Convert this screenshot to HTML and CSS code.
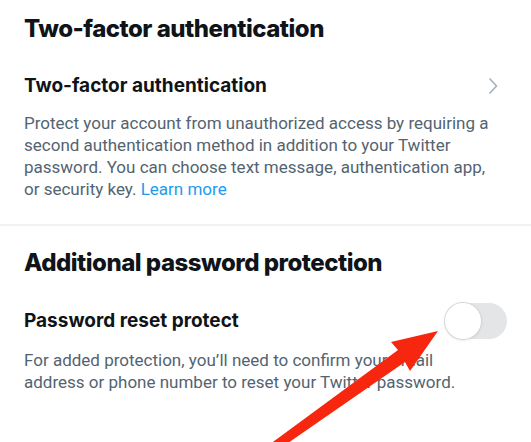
FILE: index.html
```html
<!DOCTYPE html>
<html lang="en">
<head>
  <meta charset="UTF-8" />
  <title>Security settings</title>
  <meta name="viewport" content="width=device-width, initial-scale=1" />
  <link rel="stylesheet" href="styles.css">
</head>
<body>

<div class="page">
  <section class="group">
    <h2 class="group-title">Two-factor authentication</h2>
    <div class="item">
      <div class="item-row">
        <span class="item-title">Two-factor authentication</span>
        <svg class="chevron" viewBox="0 0 12 18" width="12" height="18">
          <path d="M2.5 1.5 L9.5 9 L2.5 16.5" fill="none" stroke="#a5b1bb" stroke-width="1.6" />
        </svg>
      </div>
      <p class="item-desc">
        Protect your account from unauthorized access by requiring a second authentication method in addition to your Twitter password. You can choose text message, authentication app, or security key. <a href="#" class="link">Learn more</a>
      </p>
    </div>
  </section>

  <hr class="divider" />

  <section class="group">
    <h2 class="group-title second">Additional password protection</h2>
    <div class="item compact">
      <div class="item-row">
        <span class="item-title">Password reset protect</span>
        <span class="toggle"><span class="knob"></span></span>
      </div>
      <p class="item-desc tight">
        For added protection, you’ll need to confirm your email address or phone number to reset your Twitter password.
      </p>
    </div>
  </section>

  <!-- annotation arrow pointing at the toggle -->
  <svg class="arrow" viewBox="0 0 531 442" width="531" height="442">
    <polygon fill="#f7260f" points="438,331 391,342 398,350 262,450 275,452 405,362 410,371" />
  </svg>
</div>

</body>
</html>
```

FILE: styles.css
```css
:root {
  --text: #0f1419;
  --muted: #536471;
  --blue: #1d9bf0;
  --line: #eff3f4;
}

* {
  box-sizing: border-box;
}

body {
  margin: 0;
  background: white;
  font-family: 'Inter', 'Liberation Sans', sans-serif;
  color: var(--text);
}

.page {
  position: relative;
  width: 531px;
  height: 442px;
  overflow: hidden;
}

.group-title {
  margin: 0;
  padding: 15px 24px;
  font-size: 24px;
  line-height: 28px;
  font-weight: 800;
  letter-spacing: -0.5px;
}

.group-title.second {
  padding-top: 23px;
}

.item {
  padding: 16px 24px 24px;
}

.item.compact {
  padding-top: 11px;
}

.item-row {
  display: flex;
  align-items: center;
  justify-content: space-between;
}

.item-title {
  font-size: 19px;
  line-height: 24px;
  font-weight: 700;
}

.chevron {
  margin-right: 8px;
}

.item-desc {
  margin: 14px 13px 0 0;
  font-family: 'Roboto', 'Liberation Sans', sans-serif;
  font-size: 17px;
  line-height: 22px;
  color: var(--muted);
}

.item-desc.tight {
  margin-top: 10px;
}

.link {
  color: var(--blue);
  text-decoration: none;
}

.divider {
  margin: 0;
  border: none;
  height: 2px;
  background: var(--line);
}

.toggle {
  display: flex;
  width: 62px;
  height: 36px;
  border-radius: 18px;
  background: #e3e5e7;
}

.knob {
  width: 36px;
  height: 36px;
  border-radius: 50%;
  background: white;
  box-shadow: 0 0 0 1px #d4d7da, 0 1px 3px rgba(0, 0, 0, 0.15);
}

.arrow {
  position: absolute;
  top: 0;
  left: 0;
  pointer-events: none;
}
```
